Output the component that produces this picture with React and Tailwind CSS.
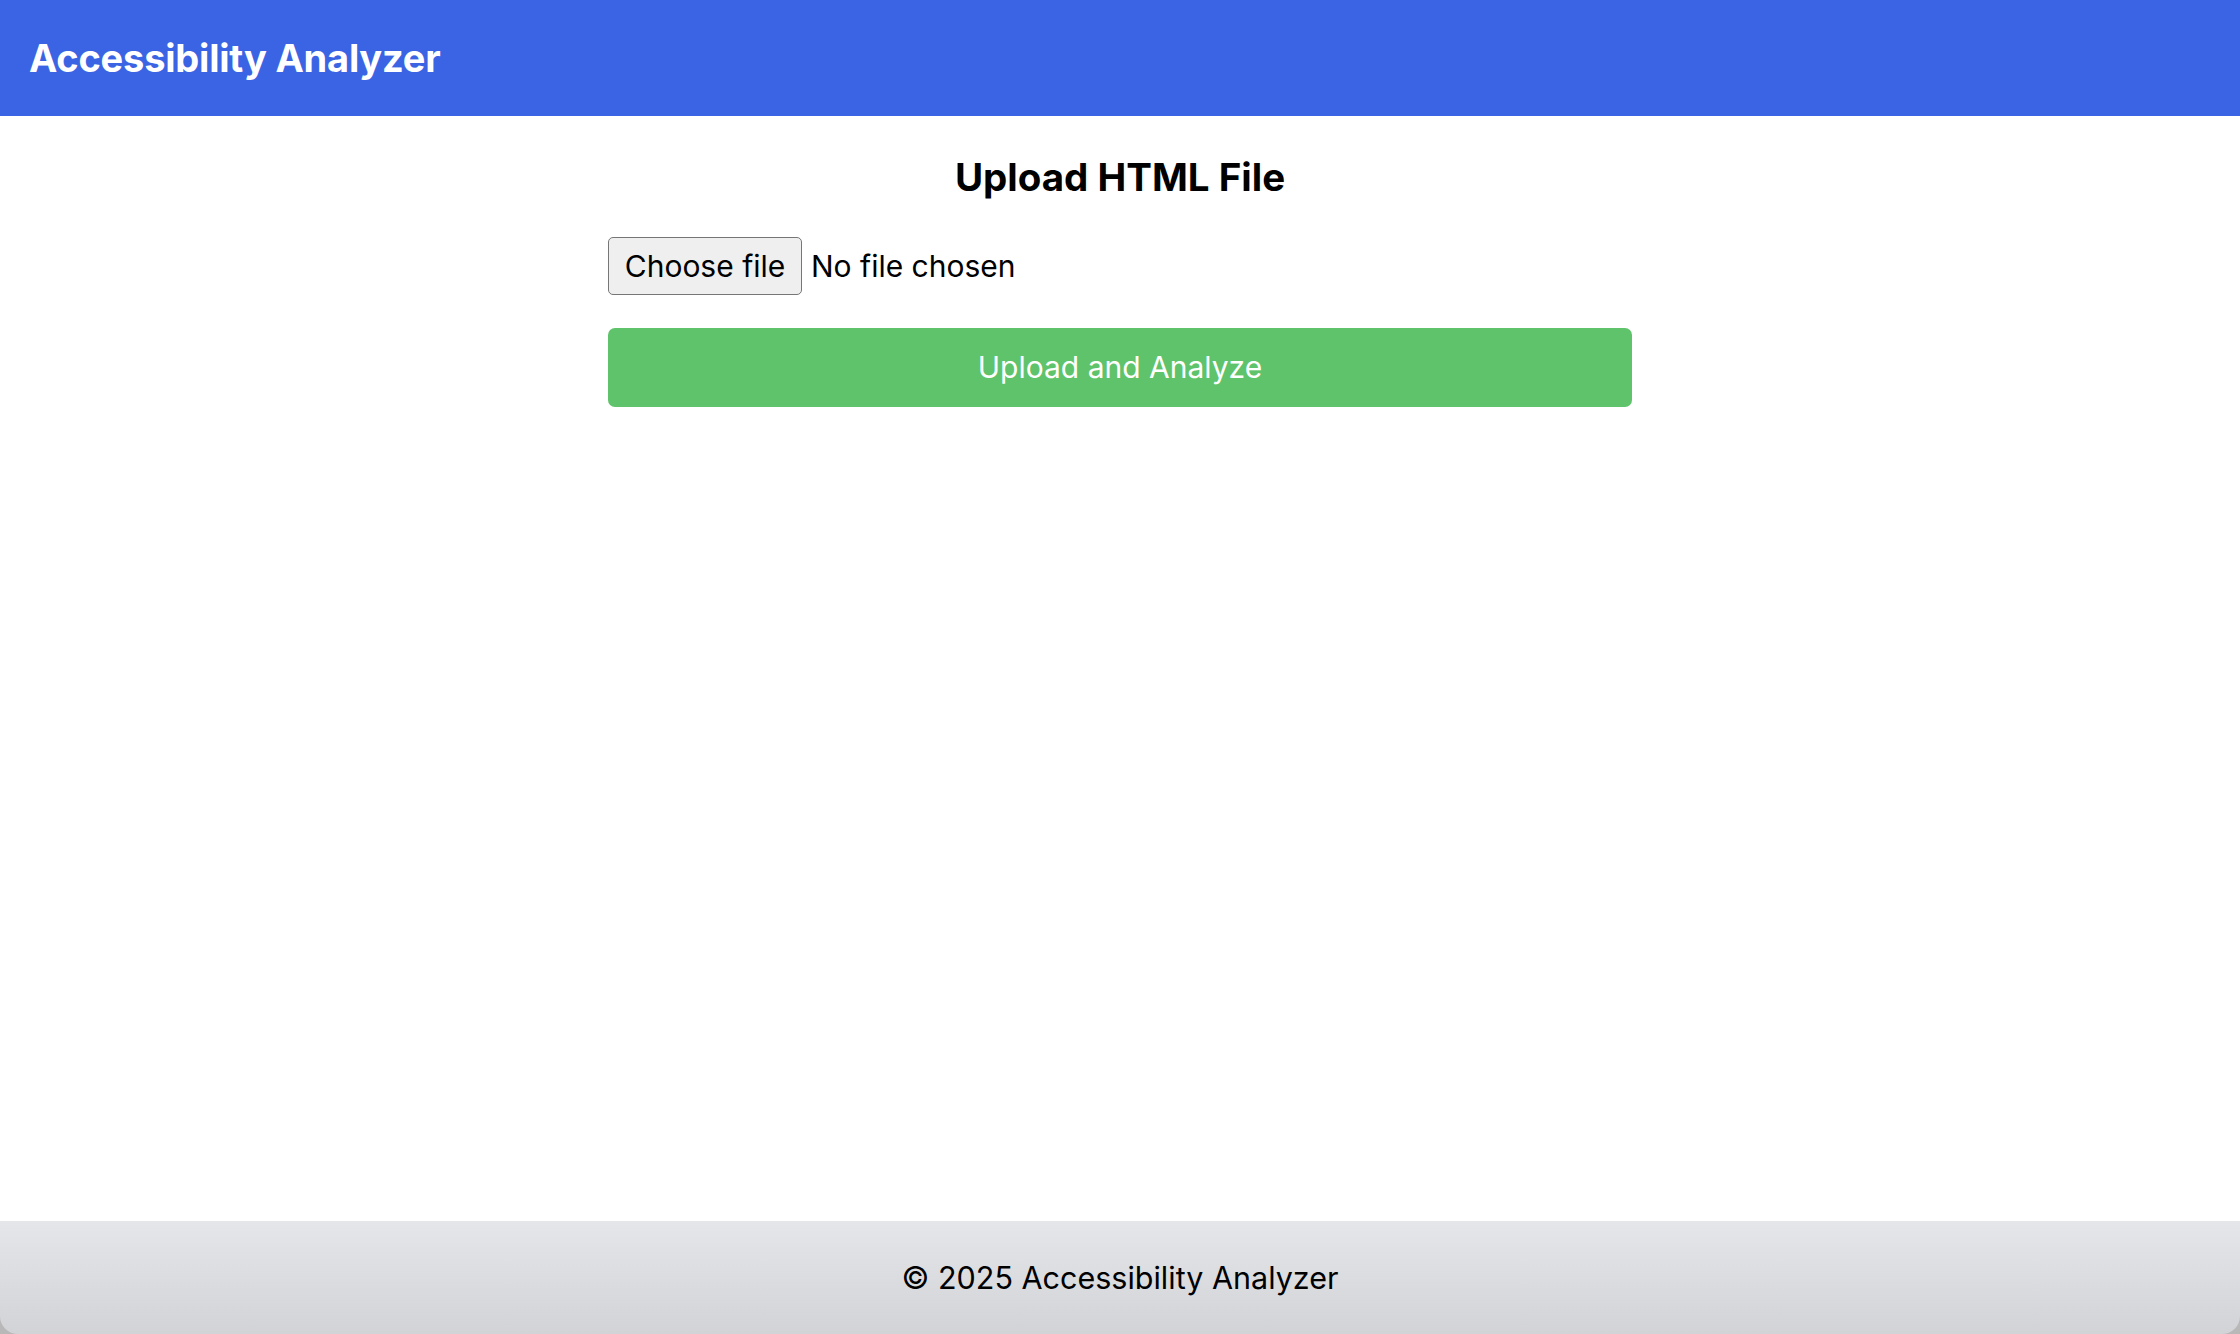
import React from 'react';

const App = () => {
  return (
    <div className="h-[1334px] flex flex-col bg-[#b8b8b8] font-['Inter',sans-serif] text-black">
      {/* Header */}
      <header className="h-[116px] shrink-0 flex items-center px-[29px] bg-[#3a64e4]">
        <h1 className="text-[38px] font-bold text-white tracking-[-0.2px]">Accessibility Analyzer</h1>
      </header>

      {/* Upload form */}
      <main className="flex-1 bg-white pt-[37px]">
        <div className="w-[1024px] mx-auto flex flex-col">
          <h2 className="text-[38.5px] leading-[48px] font-bold text-center">Upload HTML File</h2>

          <div className="mt-[36px] flex items-center gap-[9px]">
            <label className="h-[58px] w-[194px] flex items-center justify-center rounded-[5px] border-[1.5px] border-[#767676] bg-[#efefef] text-[30px] cursor-pointer">
              Choose file
            </label>
            <span className="text-[30px]">No file chosen</span>
          </div>

          <button className="mt-[33px] h-[79px] w-full rounded-[7px] bg-[#5ec36a] text-white text-[30px]">
            Upload and Analyze
          </button>
        </div>
      </main>

      {/* Footer */}
      <footer className="h-[113px] shrink-0 flex items-center justify-center rounded-b-[18px] bg-gradient-to-b from-[#e5e6ea] to-[#d2d3d7]">
        <p className="text-[30.5px]">© 2025 Accessibility Analyzer</p>
      </footer>
    </div>
  );
};

export default App;
